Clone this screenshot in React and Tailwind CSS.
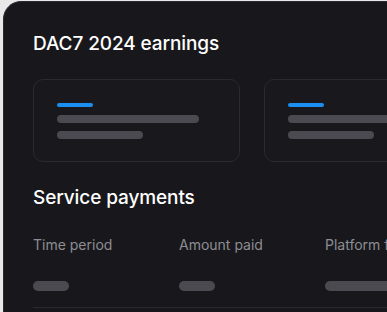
import React from 'react';

const cards = [0, 1];

const columns = [
  { label: 'Time period', pill: 'w-[36px]' },
  { label: 'Amount paid', pill: 'w-[36px]' },
  { label: 'Platform fees', pill: 'w-[80px]' },
];

export default function App() {
  return (
    <div
      className="w-[387px] h-[312px] overflow-hidden bg-[#e9e9ea] pl-[3px] pt-[1px]"
      style={{ fontFamily: 'Inter, "Noto Sans", sans-serif' }}
    >
      <div className="w-[600px] h-[330px] rounded-tl-[18px] border border-[#2b2b30] bg-[#18181c] pl-[29px] pt-[28px]">
        <h2 className="text-[19px] leading-[28px] font-medium text-white tracking-[-0.1px]">
          DAC7 2024 earnings
        </h2>

        <div className="flex gap-[24px] mt-[21px]">
          {cards.map((c) => (
            <div
              key={c}
              className="w-[207px] h-[83px] shrink-0 rounded-[10px] border border-[#2a2a2f] bg-[#19191d] pl-[23px] pt-[23px]"
            >
              <div className="w-[36px] h-[4px] rounded-full bg-[#1a8ff0]" />
              <div className="w-[142px] h-[8px] rounded-full bg-[#4a4a50] mt-[8px]" />
              <div className="w-[86px] h-[8px] rounded-full bg-[#4a4a50] mt-[8px]" />
            </div>
          ))}
        </div>

        <h2 className="text-[19px] leading-[28px] font-medium text-white mt-[22px] tracking-[-0.1px]">
          Service payments
        </h2>

        <div className="flex mt-[23px] border-b border-[#2a2a2f] pb-[16px]">
          {columns.map((col) => (
            <div key={col.label} className="w-[146px] shrink-0">
              <div className="text-[14px] leading-[20px] text-[#8d8d93] whitespace-nowrap">
                {col.label}
              </div>
              <div className={`${col.pill} h-[10px] rounded-full bg-[#4a4a50] mt-[26px]`} />
            </div>
          ))}
        </div>
      </div>
    </div>
  );
}
